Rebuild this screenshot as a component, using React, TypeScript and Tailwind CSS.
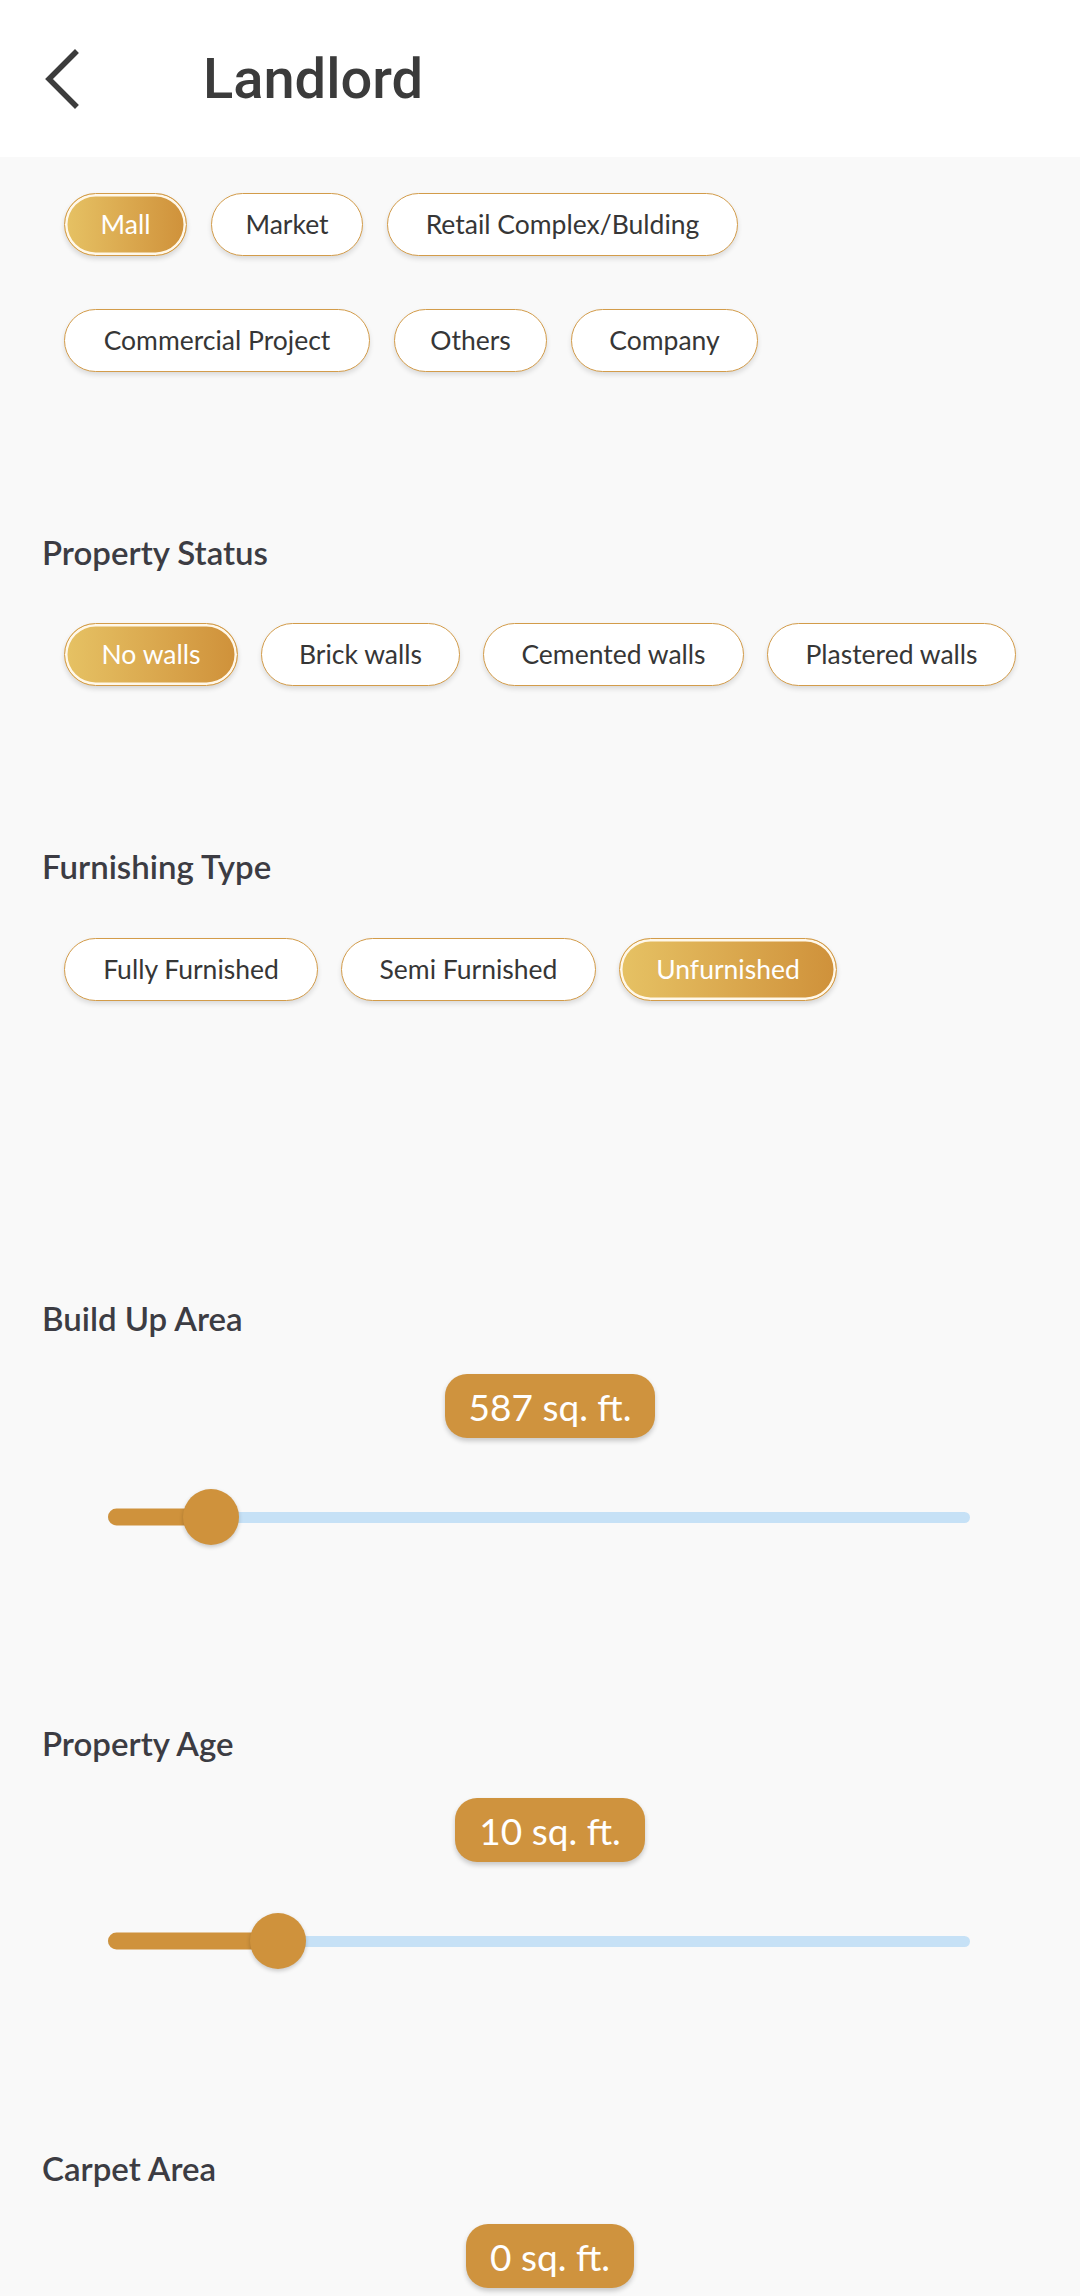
import React from "react";

type Chip = { label: string; w: string; active?: boolean };

const PROPERTY_TYPES: Chip[][] = [
  [
    { label: "Mall", w: "w-[123px]", active: true },
    { label: "Market", w: "w-[152px]" },
    { label: "Retail Complex/Bulding", w: "w-[351px]" },
  ],
  [
    { label: "Commercial Project", w: "w-[306px]" },
    { label: "Others", w: "w-[153px]" },
    { label: "Company", w: "w-[187px]" },
  ],
];

const STATUS: Chip[] = [
  { label: "No walls", w: "w-[174px]", active: true },
  { label: "Brick walls", w: "w-[199px]" },
  { label: "Cemented walls", w: "w-[261px]" },
  { label: "Plastered walls", w: "w-[249px]" },
];

const FURNISHING: Chip[] = [
  { label: "Fully Furnished", w: "w-[254px]" },
  { label: "Semi Furnished", w: "w-[255px]" },
  { label: "Unfurnished", w: "w-[218px]", active: true },
];

const body = "font-['Lato','Open_Sans',sans-serif]";

function ChipButton({ chip }: { chip: Chip }) {
  return (
    <button
      type="button"
      className={`${chip.w} h-[63px] shrink-0 rounded-full border-[1.5px] border-[#d39c4a] text-[26.5px] leading-none ${body} ${
        chip.active
          ? "bg-gradient-to-r from-[#e6c264] to-[#cf913a] text-white shadow-[inset_0_0_0_2.5px_#fff8ea,0_3px_5px_rgba(0,0,0,0.14)]"
          : "bg-white text-[#363636] shadow-[0_3px_5px_rgba(0,0,0,0.12)]"
      }`}
    >
      {chip.label}
    </button>
  );
}

function Label({ children }: { children: React.ReactNode }) {
  return (
    <h3 className={`h-[40px] pl-[42px] text-[33px] font-semibold leading-[40px] text-[#3c3c43] ${body}`}>
      {children}
    </h3>
  );
}

function RangeSlider({ value, pct }: { value: string; pct: number }) {
  return (
    <div>
      <div className="flex justify-center pl-[20px]">
        <span
          className={`flex h-[64px] items-center rounded-[22px] bg-[#cf933e] px-[24px] text-[37px] leading-none text-white shadow-[0_3px_5px_rgba(0,0,0,0.2)] ${body}`}
        >
          {value}
        </span>
      </div>
      <div className="mt-[51px] px-[108px] pr-[110px]">
        <div className="relative flex h-[56px] items-center">
          <div className="h-[11px] w-full rounded-full bg-[#c6e1f6]" />
          <div
            className="absolute left-0 top-1/2 h-[17px] -translate-y-1/2 rounded-full bg-[#cf923c]"
            style={{ width: `${pct}%` }}
          />
          <div
            className="absolute top-0 h-[56px] w-[56px] -translate-x-1/2 rounded-full bg-[#cf923c] shadow-[0_2px_4px_rgba(0,0,0,0.2)]"
            style={{ left: `${pct}%` }}
          />
        </div>
      </div>
    </div>
  );
}

export default function App() {
  return (
    <div className="min-h-screen w-[1080px] bg-[#f9f9f9]">
      {/* Header */}
      <header className="flex h-[157px] items-center bg-white">
        <button type="button" className="ml-[42px] flex h-[70px] w-[50px] items-center" aria-label="Back">
          <svg width="40" height="64" viewBox="0 0 40 64" fill="none">
            <path d="M33 6 L7 32 L33 58" stroke="#3c3c3c" strokeWidth="5.5" strokeLinecap="square" />
          </svg>
        </button>
        <h1 className="ml-[111px] font-['Roboto',sans-serif] text-[56px] font-medium leading-none text-[#3b3b3b]">
          Landlord
        </h1>
      </header>

      {/* Property type */}
      <div className="flex flex-col gap-[53px] pl-[64px] pt-[36px]">
        {PROPERTY_TYPES.map((row, i) => (
          <div key={i} className="flex gap-[24px]">
            {row.map((c) => (
              <ChipButton key={c.label} chip={c} />
            ))}
          </div>
        ))}
      </div>

      <div className="mt-[160px]">
        <Label>Property Status</Label>
        <div className="mt-[51px] flex gap-[23px] pl-[64px]">
          {STATUS.map((c) => (
            <ChipButton key={c.label} chip={c} />
          ))}
        </div>
      </div>

      <div className="mt-[160px]">
        <Label>Furnishing Type</Label>
        <div className="mt-[52px] flex gap-[23px] pl-[64px]">
          {FURNISHING.map((c) => (
            <ChipButton key={c.label} chip={c} />
          ))}
        </div>
      </div>

      <div className="mt-[297px]">
        <Label>Build Up Area</Label>
        <div className="mt-[36px]">
          <RangeSlider value="587 sq. ft." pct={11.9} />
        </div>
      </div>

      <div className="mt-[178px]">
        <Label>Property Age</Label>
        <div className="mt-[35px]">
          <RangeSlider value="10 sq. ft." pct={19.7} />
        </div>
      </div>

      <div className="mt-[179px] pb-[80px]">
        <Label>Carpet Area</Label>
        <div className="mt-[36px]">
          <RangeSlider value="0 sq. ft." pct={0} />
        </div>
      </div>
    </div>
  );
}
